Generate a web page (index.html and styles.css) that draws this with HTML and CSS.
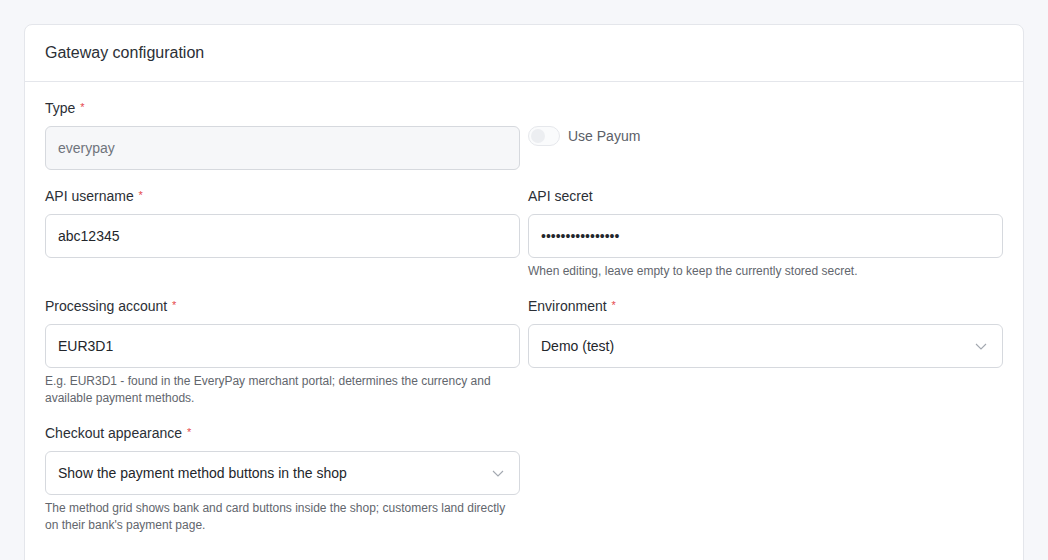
FILE: index.html
```html
<!DOCTYPE html>
<html lang="en">
<head>
<meta charset="UTF-8">
<meta name="viewport" content="width=device-width, initial-scale=1.0">
<title>Gateway configuration</title>
<link rel="stylesheet" href="styles.css">
</head>
<body>
    <div class="card">
        <div class="card-header">Gateway configuration</div>
        <div class="card-body">
            <div class="field">
                <label class="label">Type <span class="req">*</span></label>
                <input class="input" type="text" value="everypay" disabled>
            </div>
            <div class="field field-toggle">
                <span class="switch"><span class="knob"></span></span>
                <span class="switch-label">Use Payum</span>
            </div>

            <div class="field">
                <label class="label" for="username">API username <span class="req">*</span></label>
                <input class="input" id="username" type="text" value="abc12345">
            </div>
            <div class="field">
                <label class="label" for="secret">API secret</label>
                <input class="input" id="secret" type="password" value="abcdefghijklmnop">
                <div class="help">When editing, leave empty to keep the currently stored secret.</div>
            </div>

            <div class="field">
                <label class="label" for="account">Processing account <span class="req">*</span></label>
                <input class="input" id="account" type="text" value="EUR3D1">
                <div class="help">E.g. EUR3D1 - found in the EveryPay merchant portal; determines the currency and available payment methods.</div>
            </div>
            <div class="field">
                <label class="label" for="env">Environment <span class="req">*</span></label>
                <div class="select-wrap">
                    <select class="input select" id="env">
                        <option>Demo (test)</option>
                        <option>Live</option>
                    </select>
                    <svg class="chevron" width="12" height="12" viewBox="0 0 12 12"><path d="M1 4l5 5 5-5" fill="none" stroke="#a3a8b0" stroke-width="1.1"/></svg>
                </div>
            </div>

            <div class="field">
                <label class="label" for="appearance">Checkout appearance <span class="req">*</span></label>
                <div class="select-wrap">
                    <select class="input select" id="appearance">
                        <option>Show the payment method buttons in the shop</option>
                        <option>Redirect to the EveryPay payment page</option>
                    </select>
                    <svg class="chevron" width="12" height="12" viewBox="0 0 12 12"><path d="M1 4l5 5 5-5" fill="none" stroke="#a3a8b0" stroke-width="1.1"/></svg>
                </div>
                <div class="help">The method grid shows bank and card buttons inside the shop; customers land directly on their bank's payment page.</div>
            </div>
        </div>
    </div>
</body>
</html>
```

FILE: styles.css
```css
body {
    margin: 0;
    padding: 24px;
    background-color: #f6f7fa;
    font-family: "Liberation Sans", Arial, sans-serif;
    color: #2b2f36;
}
.card {
    background: #fff;
    border: 1px solid #e4e6eb;
    border-radius: 8px;
    min-height: 600px;
}
.card-header {
    padding: 16px 20px;
    line-height: 24px;
    font-size: 16px;
    color: #2b2f36;
    border-bottom: 1px solid #e4e6eb;
}
.card-body {
    padding: 16px 20px;
    display: grid;
    grid-template-columns: 1fr 1fr;
    column-gap: 8px;
    row-gap: 16px;
    align-items: start;
}
.field {
    display: flex;
    flex-direction: column;
}
.label {
    font-size: 14px;
    line-height: 20px;
    height: 20px;
    margin-bottom: 8px;
    color: #2b2f36;
}
.req {
    color: #e5484d;
    font-size: 11px;
    line-height: 0;
    position: relative;
    top: -2px;
    margin-left: 1px;
}
.input {
    box-sizing: border-box;
    height: 44px;
    width: 100%;
    padding: 0 12px;
    border: 1px solid #d6d9de;
    border-radius: 6px;
    background: #fff;
    font-family: "Liberation Sans", Arial, sans-serif;
    font-size: 14px;
    color: #23262b;
    outline: none;
}
.input:disabled {
    background: #f6f7f9;
    color: #6f747c;
}
.select-wrap {
    position: relative;
}
.select {
    appearance: none;
    -webkit-appearance: none;
    padding-right: 36px;
}
.chevron {
    position: absolute;
    right: 16px;
    top: 16px;
    pointer-events: none;
}
.help {
    margin-top: 5px;
    font-size: 12px;
    line-height: 17px;
    color: #62666d;
}
.field-toggle {
    flex-direction: row;
    align-items: center;
    gap: 8px;
    margin-top: 28px;
}
.switch {
    box-sizing: border-box;
    width: 32px;
    height: 20px;
    border: 1px solid #e6e8ec;
    border-radius: 10px;
    background: #fafbfc;
    display: flex;
    align-items: center;
    padding-left: 2px;
}
.knob {
    width: 14px;
    height: 14px;
    border-radius: 50%;
    background: #eceef1;
}
.switch-label {
    font-size: 14px;
    color: #5b6068;
}
```
